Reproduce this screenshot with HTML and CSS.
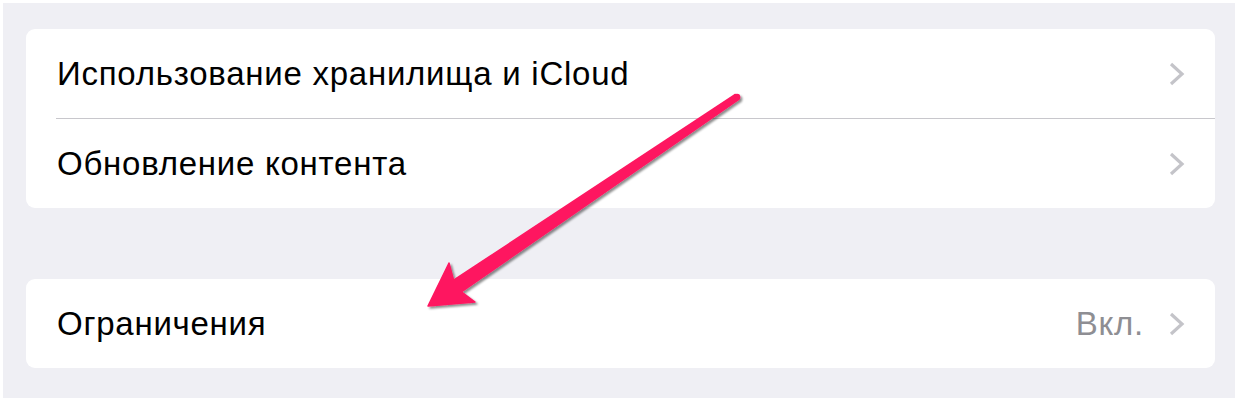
FILE: index.html
```html
<!DOCTYPE html>
<html lang="ru">
<head>
    <meta charset="UTF-8">
    <meta name="viewport" content="width=device-width, initial-scale=1.0">
    <title>Основные</title>
    <link rel="stylesheet" href="styles.css">
</head>
<body>
    <div class="screen">
        <div class="group">
            <div class="row">
                <span class="label">Использование хранилища и iCloud</span>
                <svg class="chevron" viewBox="0 0 16 24"><polyline points="2,2 13,12 2,22"/></svg>
            </div>
            <div class="separator"></div>
            <div class="row">
                <span class="label">Обновление контента</span>
                <svg class="chevron" viewBox="0 0 16 24"><polyline points="2,2 13,12 2,22"/></svg>
            </div>
        </div>

        <div class="group">
            <div class="row">
                <span class="label">Ограничения</span>
                <span class="value">Вкл.</span>
                <svg class="chevron" viewBox="0 0 16 24"><polyline points="2,2 13,12 2,22"/></svg>
            </div>
        </div>

        <!-- annotation arrow drawn over the list -->
        <svg class="arrow" viewBox="0 0 1238 402">
            <defs>
                <filter id="shadow" x="-10%" y="-10%" width="120%" height="120%">
                    <feDropShadow dx="2" dy="2" stdDeviation="1.2" flood-color="#000" flood-opacity="0.45"/>
                </filter>
            </defs>
            <g filter="url(#shadow)" fill="#fe1560" stroke="#fe1560" stroke-width="1.5" stroke-linejoin="round">
                <polygon points="735.3,94.5 453.6,280.2 449,263 428,306 475,302 461.4,291.8 738.7,99.5"/>
                <circle cx="737" cy="97" r="2.6"/>
            </g>
        </svg>
    </div>
</body>
</html>
```

FILE: styles.css
```css
body {
    margin: 0;
    background: #ffffff;
    font-family: "Liberation Sans", Arial, sans-serif;
}
.screen {
    position: relative;
    margin: 3px;
    width: 1232px;
    height: 395px;
    box-sizing: border-box;
    padding: 26px 20px 0 23px;
    background: #efeff4;
    display: flex;
    flex-direction: column;
    gap: 71px;
}
.group {
    background: #ffffff;
    border-radius: 9px;
}
.row {
    height: 89px;
    display: flex;
    align-items: center;
    padding: 0 30px 0 31px;
    font-size: 33px;
    letter-spacing: 0.75px;
    color: #000000;
}
.label {
    flex: 1;
}
.value {
    color: #8e8e93;
    margin-right: 25px;
}
.separator {
    height: 1px;
    margin-left: 30px;
    background: #c8c7cc;
}
.chevron {
    width: 16px;
    height: 24px;
}
.chevron polyline {
    fill: none;
    stroke: #c4c4c9;
    stroke-width: 3.2;
}
.arrow {
    position: absolute;
    left: -3px;
    top: -3px;
    width: 1238px;
    height: 402px;
    pointer-events: none;
}
```
